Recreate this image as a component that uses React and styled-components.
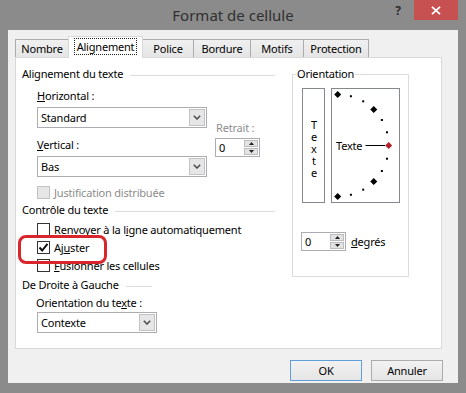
import React from 'react';
import styled, { createGlobalStyle } from 'styled-components';

const Global = createGlobalStyle`
  html, body { margin: 0; padding: 0; background: #8b8b8b; }
  body { font-family: "Noto Sans", "Open Sans", sans-serif; font-size: 11px; letter-spacing: -0.2px; color: #000; }
  * { box-sizing: border-box; }
`;

const Window = styled.div`
  width: 466px;
  height: 393px;
  background: #8b8b8b;
  display: flex;
  flex-direction: column;
`;

const TitleBar = styled.div`
  height: 30px;
  display: grid;
  grid-template-columns: 1fr auto 1fr;
  align-items: start;
  flex: none;
`;

const Title = styled.div`
  grid-column: 2;
  font-size: 15px;
  letter-spacing: 0;
  line-height: 31px;
  color: #303030;
`;

const Controls = styled.div`
  justify-self: end;
  display: flex;
  align-items: flex-start;
  padding-right: 8px;
`;

const Help = styled.div`
  width: 16px;
  margin-right: 8px;
  text-align: center;
  font-weight: bold;
  font-size: 12px;
  line-height: 22px;
  color: #2e2e2e;
`;

const CloseBtn = styled.div`
  width: 44px;
  height: 20px;
  background: #c75050;
  display: flex;
  align-items: center;
  justify-content: center;
`;

const Client = styled.div`
  flex: 1;
  margin: 0 8px 10px 8px;
  background: #f0f0f0;
  padding: 6px 16px 0 7px;
  display: flex;
  flex-direction: column;
`;

const TabRow = styled.div`
  display: flex;
  align-items: flex-end;
  height: 22px;
  margin-bottom: -1px;
  position: relative;
  z-index: 1;
`;

const Tab = styled.div`
  width: ${p => p.$w}px;
  height: ${p => (p.$active ? 22 : 18)}px;
  margin-bottom: ${p => (p.$active ? 0 : 1)}px;
  margin-left: ${p => (p.$first ? 0 : -1)}px;
  background: ${p => (p.$active ? '#ffffff' : 'linear-gradient(#f0f0f0, #e5e5e5)')};
  border: 1px solid ${p => (p.$active ? '#d9d9d9' : '#acacac')};
  border-bottom: none;
  display: flex;
  align-items: center;
  justify-content: center;
  line-height: 16px;
  padding-bottom: ${p => (p.$active ? 2 : 0)}px;
  position: relative;
  z-index: ${p => (p.$active ? 2 : 1)};
`;

const Focus = styled.span`
  border: 1px dotted #222;
  padding: 0 2px;
  line-height: 15px;
`;

const Panel = styled.div`
  height: 292px;
  background: #fff;
  border: 1px solid #d9d9d9;
  padding: 8px 0 0 6px;
  display: grid;
  grid-template-columns: 260px 117px;
  column-gap: 10px;
  align-items: start;
`;

const Column = styled.div`
  display: flex;
  flex-direction: column;
  align-items: flex-start;
`;

const SectionHeader = styled.div`
  width: ${p => p.$w}px;
  margin-top: ${p => p.$mt || 0}px;
  display: flex;
  align-items: center;
  gap: 7px;
  line-height: 16px;
  white-space: nowrap;
  &::after {
    content: '';
    flex: 1;
    height: 1px;
    margin-top: 2px;
    background: #dcdcdc;
  }
`;

const Label = styled.div`
  margin-top: ${p => p.$mt || 0}px;
  margin-left: ${p => (p.$ml ?? 14)}px;
  line-height: 16px;
  white-space: nowrap;
  color: ${p => (p.$disabled ? '#8d8d8d' : '#000')};
`;

const Mn = styled.span`
  text-decoration: underline;
  text-underline-offset: 1px;
`;

const AlignRow = styled.div`
  display: flex;
  margin-top: 6px;
  margin-left: 15px;
`;

const Stack = styled.div`
  display: flex;
  flex-direction: column;
  align-items: flex-start;
  margin-left: ${p => p.$ml || 0}px;
  margin-top: ${p => p.$mt || 0}px;
`;

const ComboBox = styled.div`
  width: ${p => p.$w}px;
  height: 21px;
  margin-top: ${p => p.$mt || 0}px;
  margin-left: ${p => p.$ml || 0}px;
  border: 1px solid #abadb3;
  background: #fff;
  display: flex;
  align-items: stretch;
`;

const ComboValue = styled.div`
  flex: 1;
  padding-left: 3px;
  line-height: 19px;
`;

const DropBtn = styled.div`
  width: 16px;
  margin: 1px;
  background: #e6e6e6;
  border: 1px solid #c3c3c3;
  display: flex;
  align-items: center;
  justify-content: center;
`;

const SpinBox = styled.div`
  width: ${p => p.$w}px;
  height: 19px;
  margin-top: ${p => p.$mt || 0}px;
  border: 1px solid #abadb3;
  background: #fff;
  display: flex;
`;

const SpinValue = styled.div`
  flex: 1;
  padding-left: 3px;
  line-height: 17px;
`;

const SpinBtns = styled.div`
  width: 14px;
  margin: 1px;
  display: flex;
  flex-direction: column;
  gap: 1px;
`;

const SpinBtn = styled.div`
  flex: 1;
  background: #e3e3e3;
  border: 1px solid #bdbdbd;
  display: flex;
  align-items: center;
  justify-content: center;
`;

const CheckRow = styled.div`
  display: flex;
  align-items: center;
  gap: 4px;
  height: 18px;
  margin-left: 15px;
  margin-top: ${p => p.$mt || 0}px;
  position: relative;
  white-space: nowrap;
  color: ${p => (p.$disabled ? '#8d8d8d' : '#000')};
`;

const Box = styled.div`
  width: 13px;
  height: 13px;
  flex: none;
  border: 1px solid ${p => (p.$disabled ? '#c2c2c2' : '#333')};
  background: ${p => (p.$disabled ? '#e6e6e6' : '#fff')};
  display: flex;
  align-items: center;
  justify-content: center;
`;

const Highlight = styled.div`
  position: absolute;
  left: -19px;
  top: -3px;
  width: 89px;
  height: 29px;
  border: 3px solid #d8262c;
  border-radius: 8px;
  pointer-events: none;
  z-index: 2;
`;

const Group = styled.div`
  margin-top: 8px;
  width: 117px;
  height: 203px;
  border: 1px solid #dcdcdc;
  display: flex;
  flex-direction: column;
  align-items: flex-start;
`;

const Legend = styled.div`
  margin-top: -9px;
  margin-left: 3px;
  padding: 0 1px;
  background: #fff;
  line-height: 16px;
`;

const OrientRow = styled.div`
  display: flex;
  gap: 6px;
  margin-top: 6px;
  margin-left: 9px;
`;

const VerticalBox = styled.div`
  width: 23px;
  height: 115px;
  border: 1px solid #85888f;
  display: flex;
  align-items: center;
  justify-content: center;
`;

const VerticalText = styled.span`
  writing-mode: vertical-lr;
  text-orientation: upright;
  font-size: 11px;
  letter-spacing: -3.1px;
  line-height: 14px;
  margin-top: 2px;
`;

const DialBox = styled.div`
  width: 69px;
  height: 115px;
  border: 1px solid #85888f;
`;

const DegRow = styled.div`
  display: flex;
  align-items: center;
  gap: 5px;
  margin-top: 29px;
  margin-left: 8px;
`;

const ButtonRow = styled.div`
  display: flex;
  justify-content: flex-end;
  gap: 9px;
  margin-top: 11px;
  margin-right: -1px;
`;

const Button = styled.div`
  width: 72px;
  height: 21px;
  border: 1px solid ${p => (p.$default ? '#5fa0dc' : '#acacac')};
  background: linear-gradient(#f2f2f2, #e5e5e5);
  display: flex;
  align-items: center;
  justify-content: center;
`;

const Chevron = () => (
  <svg width="8" height="5" viewBox="0 0 8 5">
    <path d="M0.8 0.8 L4 4 L7.2 0.8" stroke="#4a4a4a" strokeWidth="1.5" fill="none" />
  </svg>
);

const Combo = ({ w, mt, ml, children }) => (
  <ComboBox $w={w} $mt={mt} $ml={ml}>
    <ComboValue>{children}</ComboValue>
    <DropBtn><Chevron /></DropBtn>
  </ComboBox>
);

const Spin = ({ w, mt, value }) => (
  <SpinBox $w={w} $mt={mt}>
    <SpinValue>{value}</SpinValue>
    <SpinBtns>
      <SpinBtn>
        <svg width="5" height="3" viewBox="0 0 5 3"><path d="M0 3 L2.5 0 L5 3 Z" fill="#222" /></svg>
      </SpinBtn>
      <SpinBtn>
        <svg width="5" height="3" viewBox="0 0 5 3"><path d="M0 0 L2.5 3 L5 0 Z" fill="#222" /></svg>
      </SpinBtn>
    </SpinBtns>
  </SpinBox>
);

const Check = ({ checked, disabled }) => (
  <Box $disabled={disabled}>
    {checked && (
      <svg width="11" height="11" viewBox="0 0 11 11">
        <path d="M1.5 5.5 L4.2 8.5 L9.5 1.8" stroke="#111" strokeWidth="2" fill="none" />
      </svg>
    )}
  </Box>
);

const Dial = () => {
  const cx = 5.7;
  const cy = 56.5;
  const r = 51;
  const marks = [];
  for (let i = 0; i <= 12; i++) {
    const deg = 90 - i * 15;
    const a = (deg * Math.PI) / 180;
    const x = cx + r * Math.cos(a);
    const y = cy - r * Math.sin(a);
    if (deg === 0) {
      marks.push(<path key={i} d={`M${x} ${y - 3.5} L${x + 3.5} ${y} L${x} ${y + 3.5} L${x - 3.5} ${y} Z`} fill="#b3202a" />);
    } else if (deg % 45 === 0) {
      marks.push(<path key={i} d={`M${x} ${y - 3.5} L${x + 3.5} ${y} L${x} ${y + 3.5} L${x - 3.5} ${y} Z`} fill="#000" />);
    } else {
      marks.push(<rect key={i} x={x - 1} y={y - 1} width="2" height="2" fill="#000" />);
    }
  }
  return (
    <svg width="67" height="113" viewBox="0 0 67 113">
      {marks}
      <text x="4" y="60.5" fontSize="11" letterSpacing="-0.2" fontFamily="Noto Sans, Open Sans, sans-serif" fill="#000">Texte</text>
      <line x1="33.5" y1="56.5" x2="53" y2="56.5" stroke="#000" strokeWidth="1" />
    </svg>
  );
};

const tabs = [
  { label: 'Nombre', w: 54 },
  { label: 'Alignement', w: 75, active: true },
  { label: 'Police', w: 52 },
  { label: 'Bordure', w: 58 },
  { label: 'Motifs', w: 54 },
  { label: 'Protection', w: 66 },
];

export default function App() {
  return (
    <>
      <Global />
      <Window>
        <TitleBar>
          <Title>Format de cellule</Title>
          <Controls>
            <Help>?</Help>
            <CloseBtn>
              <svg width="10" height="9" viewBox="0 0 10 9">
                <path d="M1 0.8 L9 8.2 M9 0.8 L1 8.2" stroke="#fff" strokeWidth="1.8" />
              </svg>
            </CloseBtn>
          </Controls>
        </TitleBar>
        <Client>
          <TabRow>
            {tabs.map((t, i) => (
              <Tab key={t.label} $w={t.w} $active={t.active} $first={i === 0}>
                {t.active ? <Focus>{t.label}</Focus> : t.label}
              </Tab>
            ))}
          </TabRow>
          <Panel>
            <Column>
              <SectionHeader $w={253}>Alignement du texte</SectionHeader>
              <AlignRow>
                <Stack>
                  <Label $ml={0}><Mn>H</Mn>orizontal :</Label>
                  <Combo w={170} mt={3}>Standard</Combo>
                  <Label $ml={0} $mt={9}><Mn>V</Mn>ertical :</Label>
                  <Combo w={170} mt={3}>Bas</Combo>
                </Stack>
                <Stack $ml={8} $mt={32}>
                  <Label $ml={1} $disabled>Retrait :</Label>
                  <Spin w={45} mt={2} value="0" />
                </Stack>
              </AlignRow>
              <CheckRow $mt={6} $disabled>
                <Check disabled />
                Justification distribuée
              </CheckRow>
              <SectionHeader $w={253} $mt={1}>Contrôle du texte</SectionHeader>
              <CheckRow $mt={2}>
                <Check />
                <span>Renvoyer à la l<Mn>i</Mn>gne automatiquement</span>
              </CheckRow>
              <CheckRow>
                <Check checked />
                <span>Aj<Mn>u</Mn>ster</span>
                <Highlight />
              </CheckRow>
              <CheckRow>
                <Check />
                <span><Mn>F</Mn>usionner les cellules</span>
              </CheckRow>
              <SectionHeader $w={130} $mt={3}>De Droite à Gauche</SectionHeader>
              <Label $mt={2}>Orientation du te<Mn>x</Mn>te :</Label>
              <Combo w={120} mt={1} ml={15}>Contexte</Combo>
            </Column>
            <Group>
              <Legend>Orientation</Legend>
              <OrientRow>
                <VerticalBox>
                  <VerticalText>Texte</VerticalText>
                </VerticalBox>
                <DialBox><Dial /></DialBox>
              </OrientRow>
              <DegRow>
                <Spin w={45} value="0" />
                <span><Mn>d</Mn>egrés</span>
              </DegRow>
            </Group>
          </Panel>
          <ButtonRow>
            <Button $default>OK</Button>
            <Button>Annuler</Button>
          </ButtonRow>
        </Client>
      </Window>
    </>
  );
}
